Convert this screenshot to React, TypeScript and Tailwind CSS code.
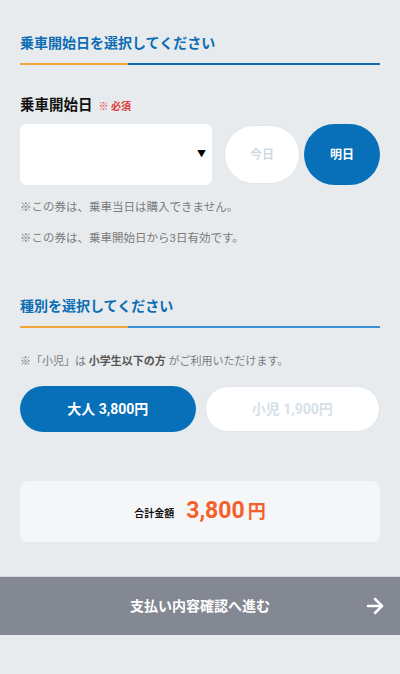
import { ArrowRight } from "lucide-react";

const font = { fontFamily: 'Roboto, "Noto Sans CJK JP", sans-serif' };

function SectionTitle({ children, blue }: { children: string; blue: string }) {
  return (
    <div>
      <h2 className="text-[14px] font-bold leading-[22px] text-[#0b6db4]">{children}</h2>
      <div className="mt-[9px] flex h-[2px]">
        <div className="w-[108px] bg-[#f0a43a]" />
        <div className={`flex-1 ${blue}`} />
      </div>
    </div>
  );
}

export default function App() {
  return (
    <div className="min-h-[674px] w-full bg-[#e8ebed]" style={font}>
      <div className="px-5 pt-8">
        <SectionTitle blue="bg-[#1769b0]">乗車開始日を選択してください</SectionTitle>

        <div className="mt-[29px] flex h-6 items-center gap-[6px] leading-6">
          <span className="text-[14.5px] font-bold text-[#111]">乗車開始日</span>
          <span className="mt-[2px] text-[10px] font-bold text-[#e23a3a]">※ 必須</span>
        </div>

        <div className="mt-[6px] flex h-[61px] items-center">
          <div className="flex h-full w-[192px] items-center justify-end rounded-[7px] bg-white pr-[6px]">
            <span className="text-[9px] text-black">▼</span>
          </div>
          <button className="ml-3 h-[59px] w-[76px] rounded-full border border-[#dfe5ea] bg-white text-[12px] font-bold text-[#cfdbe5]">
            今日
          </button>
          <button className="ml-1 h-[61px] flex-1 rounded-full bg-[#0770b9] text-[12px] font-bold text-white">
            明日
          </button>
        </div>

        <p className="mt-[13px] text-[11.5px] leading-[18px] text-[#7b7b7b]">※この券は、乗車当日は購入できません。</p>
        <p className="mt-[13px] text-[11.5px] leading-[18px] text-[#7b7b7b]">※この券は、乗車開始日から3日有効です。</p>

        <div className="mt-[48px]">
          <SectionTitle blue="bg-[#3b8fd5]">種別を選択してください</SectionTitle>
        </div>

        <p className="mt-[25px] text-[11px] leading-[18px] text-[#7b7b7b]">
          ※「小児」は <span className="font-bold text-[#555]">小学生以下の方</span> がご利用いただけます。
        </p>

        <div className="mt-[15px] grid grid-cols-2 gap-[9px]">
          <button className="h-[46px] rounded-full bg-[#0770b9] text-[14px] font-bold text-white">大人 3,800円</button>
          <button className="h-[46px] rounded-full border border-[#dfe5ea] bg-white text-[14px] font-bold text-[#d6e0e8]">
            小児 1,900円
          </button>
        </div>

        <div className="mt-[49px] flex h-[61px] items-center justify-center gap-[12px] rounded-[8px] bg-[#f5f6f8]">
          <span className="mt-[4px] text-[10px] font-bold text-[#111]">合計金額</span>
          <span className="flex items-baseline gap-[3px] text-[#f4602a]">
            <span className="text-[23px] font-bold">3,800</span>
            <span className="text-[18px] font-bold">円</span>
          </span>
        </div>
      </div>

      <div className="relative mt-[34px] flex h-[59px] items-center justify-center border-t border-[#d4d7db] bg-[#838893]">
        <span className="text-[14px] font-bold text-white">支払い内容確認へ進む</span>
        <ArrowRight className="absolute right-[13px] top-1/2 -translate-y-1/2 text-white" size={24} strokeWidth={2.5} />
      </div>
    </div>
  );
}
